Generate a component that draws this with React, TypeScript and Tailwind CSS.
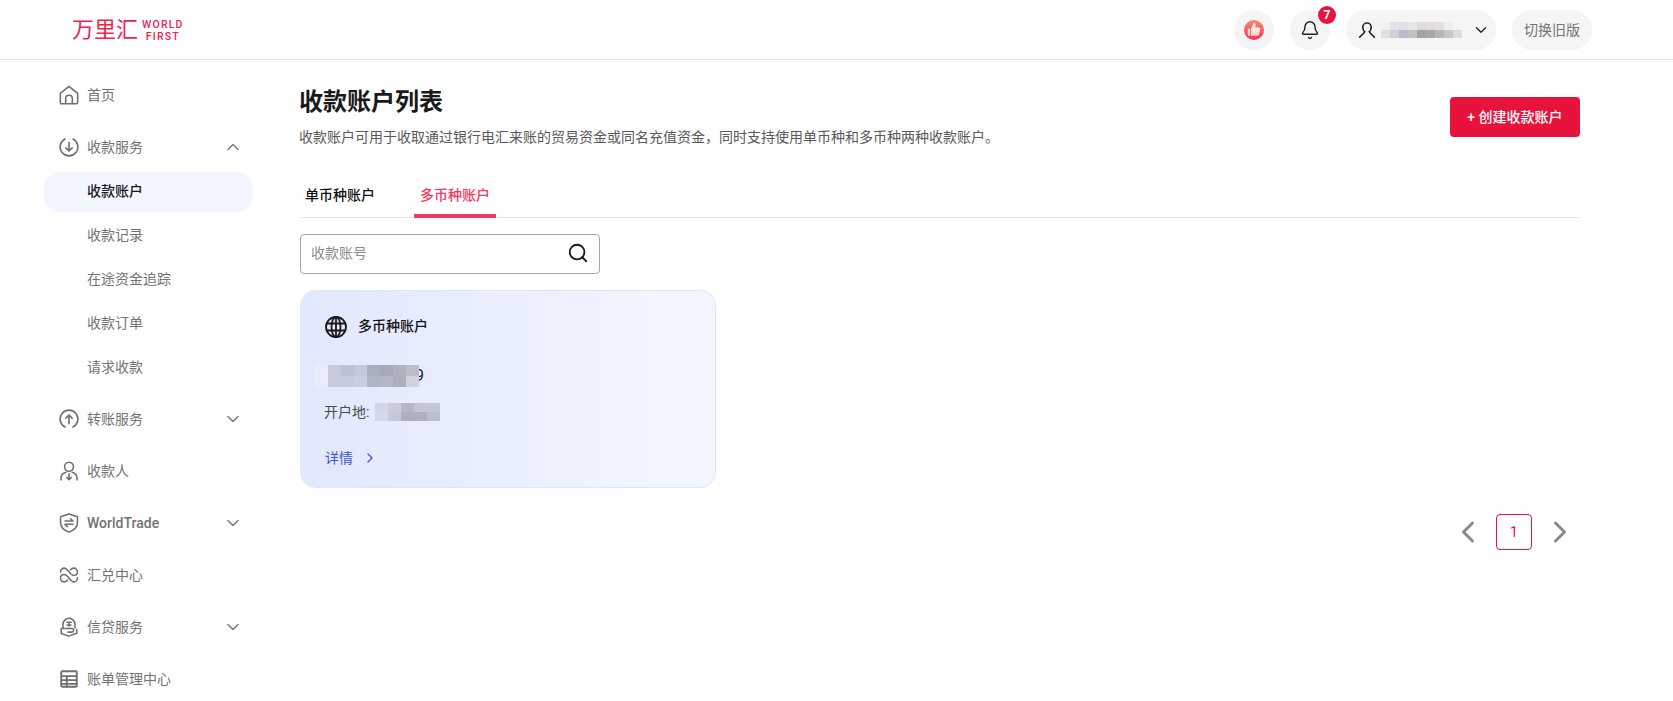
// App.tsx
import React from 'react';
import { ChevronDown, ChevronUp, ChevronLeft, ChevronRight, Search, Bell } from 'lucide-react';

const ICON = 'w-5 h-5 shrink-0 text-[#6f6f6f]';

function HomeIcon() {
    return (
        <svg className={ICON} viewBox="0 0 18 18" fill="none" stroke="currentColor" strokeWidth={1.4} strokeLinejoin="round">
            <path d="M1.2 7.6 9 1.2l7.8 6.4v8.2a1 1 0 0 1-1 1H2.2a1 1 0 0 1-1-1z" />
            <path d="M6 16.8v-4.6a3 3 0 0 1 6 0v4.6" />
        </svg>
    );
}

function CircleDownIcon() {
    return (
        <svg className={ICON} viewBox="0 0 18 18" fill="none" stroke="currentColor" strokeWidth={1.5} strokeLinecap="round" strokeLinejoin="round">
            <path d="M5.4 1.8a8 8 0 1 0 7.2 0" />
            <path d="M9 5v7.4M6.2 9.8 9 12.6l2.8-2.8" />
        </svg>
    );
}

function CircleUpIcon() {
    return (
        <svg className={ICON} viewBox="0 0 18 18" fill="none" stroke="currentColor" strokeWidth={1.5} strokeLinecap="round" strokeLinejoin="round">
            <path d="M5.4 16.2a8 8 0 1 1 7.2 0" />
            <path d="M9 13V5.8M6.2 8.2 9 5.4l2.8 2.8" />
        </svg>
    );
}

function PayeeIcon() {
    return (
        <svg className={ICON} viewBox="0 0 18 18" fill="none" stroke="currentColor" strokeWidth={1.4} strokeLinecap="round" strokeLinejoin="round">
            <circle cx="9" cy="5.2" r="4" />
            <path d="M1.8 17v-1.6c0-2.6 1.8-4.4 4.4-5.2M16.2 17v-1.6c0-2.6-1.8-4.4-4.4-5.2" />
            <path d="M9 11.6v5M7 14.8 9 16.8l2-2" />
        </svg>
    );
}

function ShieldIcon() {
    return (
        <svg className={ICON} viewBox="0 0 18 18" fill="none" stroke="currentColor" strokeWidth={1.4} strokeLinecap="round" strokeLinejoin="round">
            <path d="M9 .9 16.6 3.4v5.2c0 4-3 7-7.6 8.6-4.600-1.600-7.600-4.600-7.600-8.600V3.400z" />
            <path d="M5.400 7.200h7.200L10.400 5.200M12.600 10.200H5.400l2.200 2" />
        </svg>
    );
}

function ExchangeIcon() {
    return (
        <svg className={ICON} viewBox="0 0 18 18" fill="none" stroke="currentColor" strokeWidth={1.4} strokeLinecap="round" strokeLinejoin="round">
            <path d="M1.400 6.400c0-2.200 1.600-3.600 3.400-3.600 3 0 5 6.600 8.400 6.600 2 0 3.400-1.200 3.400-3 0-2-1.400-3.600-3.400-3.600-1.400 0-2.400.8-3 1.600" />
            <path d="M16.600 11.600c0 2.200-1.600 3.600-3.400 3.600-3 0-5-6.600-8.400-6.600-2 0-3.400 1.200-3.400 3 0 2 1.400 3.600 3.400 3.600 1.400 0 2.400-.8 3-1.600" />
        </svg>
    );
}

function LoanIcon() {
    return (
        <svg className={ICON} viewBox="0 0 18 18" fill="none" stroke="currentColor" strokeWidth={1.4} strokeLinecap="round" strokeLinejoin="round">
            <path d="M3.600 9.800V6.600a5.400 5.400 0 0 1 10.800 0v3.200" />
            <path d="M2 10.400h9.600a1.600 1.600 0 0 1 0 3.200H8M2 10.400v4.400l6.800 2.400 7.200-2.600v-3.400" />
            <path d="M7 4.800h4M9 4.800v3.600M7.200 7.200h3.600" />
        </svg>
    );
}

function TableIcon() {
    return (
        <svg className={ICON} viewBox="0 0 18 18" fill="none" stroke="currentColor" strokeWidth={1.7}>
            <rect x="2" y="2" width="14" height="14" rx="1" />
            <path d="M2 6.400h14M2 10h14M2 13.400h14M7 6.400V16" />
        </svg>
    );
}

function ThumbIcon() {
    return (
        <svg className="w-5 h-5" viewBox="0 0 20 20">
            <defs>
                <linearGradient id="thumbBg" x1="0" y1="0" x2="0" y2="1">
                    <stop offset="0" stopColor="#f98a6a" />
                    <stop offset="1" stopColor="#f5305f" />
                </linearGradient>
                <linearGradient id="thumbFg" x1="0" y1="0" x2="0" y2="1">
                    <stop offset="0" stopColor="#ffffff" />
                    <stop offset="1" stopColor="#fbd3bb" />
                </linearGradient>
            </defs>
            <circle cx="10" cy="10" r="10" fill="url(#thumbBg)" />
            <path
                d="M3.800 8.800h2.400v7H3.800zM7 8.800 9.800 3c1.200-.2 1.900.7 1.800 1.900l-.3 2.700h3.600c.9 0 1.500.8 1.300 1.700l-1.200 5.200c-.2.800-.8 1.300-1.600 1.300H7z"
                fill="url(#thumbFg)"
            />
        </svg>
    );
}

function UserIcon() {
    return (
        <svg className="w-[18px] h-[18px] text-[#222]" viewBox="0 0 18 18" fill="none" stroke="currentColor" strokeWidth={1.6} strokeLinecap="round">
            <path d="M6.600 10.600C5.200 9.600 4.800 8 4.800 6.200a4.200 4.200 0 0 1 8.400 0c0 1.800-.4 3.400-1.800 4.400" />
            <path d="M6.600 10.600c-.2 2-3.200 2.800-5 5.600M11.400 10.600c.2 2 3.200 2.800 5 5.600" />
        </svg>
    );
}

function GlobeIcon() {
    return (
        <svg className="w-[22px] h-[22px] text-[#1a1a1a]" viewBox="0 0 22 22" fill="none" stroke="currentColor" strokeWidth={1.8}>
            <circle cx="11" cy="11" r="10" />
            <ellipse cx="11" cy="11" rx="4.500" ry="10" />
            <path d="M11 1v20M1.500 7.500h19M1.500 14.500h19" />
        </svg>
    );
}

// stands in for the pixelated parts of the screenshot
function Mosaic({ colors, cell }: { colors: string[][]; cell: string }) {
    return (
        <div className="flex flex-col blur-[0.5px]">
            {colors.map((row, i) => (
                <div key={i} className="flex">
                    {row.map((c, j) => (
                        <span key={j} className={cell} style={{ backgroundColor: c }} />
                    ))}
                </div>
            ))}
        </div>
    );
}

const userBlur = [
    ['#f1f1f1', '#e4e4e6', '#dfe0e4', '#e6e6e6', '#dcdcde', '#e2dddc', '#e4e0de', '#eeeeee', '#f4f4f4'],
    ['#e2e0da', '#cfd0d0', '#b8bcc6', '#c2c2c4', '#a5a2a2', '#a8a8a6', '#b4b6b8', '#c8c8c4', '#dcdcdc'],
];

const accountBlur = [
    ['#e9ecfb', '#c6cade', '#bcc1d4', '#c3c8da', '#a9aec0', '#a8a9b6', '#b0b0be', '#bcbdc8'],
    ['#e9ecfb', '#c8cbdc', '#c7cbde', '#cacee0', '#b0b5c6', '#b5b7c6', '#aeafbc', '#ced1e0'],
];

const placeBlur = [
    ['#d2d6e6', '#c8cbdc', '#b5b6c6', '#c3c5d6', '#c3c6d6'],
    ['#d4d8e8', '#c5c8d8', '#aeafbe', '#afb0be', '#bcbecc'],
];

const subItems = ['收款账户', '收款记录', '在途资金追踪', '收款订单', '请求收款'];

function NavRow({ icon, label, chevron, bold }: { icon: React.ReactNode; label: string; chevron?: 'up' | 'down'; bold?: boolean }) {
    return (
        <div className="h-10 mb-3 flex items-center pl-[15px] pr-[10px] text-sm text-[#737373]">
            {icon}
            <span className={`ml-[8px] flex-1 ${bold ? 'font-medium' : ''}`}>{label}</span>
            {chevron === 'up' && <ChevronUp className="w-5 h-5" strokeWidth={1.6} />}
            {chevron === 'down' && <ChevronDown className="w-5 h-5" strokeWidth={1.6} />}
        </div>
    );
}

function Sidebar() {
    return (
        <aside className="w-[300px] shrink-0 pl-[44px] pr-[47px] pt-[15px]">
            <NavRow icon={<HomeIcon />} label="首页" />
            <div className="-mb-[7px]">
                <NavRow icon={<CircleDownIcon />} label="收款服务" chevron="up" />
            </div>
            <div className="mb-[11px]">
                {subItems.map((item, i) => (
                    <div
                        key={item}
                        className={`h-10 mb-1 pb-[2px] flex items-center pl-[43px] text-sm rounded-2xl ${i === 0 ? 'bg-[#f2f6ff] text-[#1a1a1a] font-medium' : 'text-[#737373]'}`}
                    >
                        {item}
                    </div>
                ))}
            </div>
            <NavRow icon={<CircleUpIcon />} label="转账服务" chevron="down" />
            <NavRow icon={<PayeeIcon />} label="收款人" />
            <NavRow icon={<ShieldIcon />} label="WorldTrade" chevron="down" bold />
            <NavRow icon={<ExchangeIcon />} label="汇兑中心" />
            <NavRow icon={<LoanIcon />} label="信贷服务" chevron="down" />
            <NavRow icon={<TableIcon />} label="账单管理中心" />
        </aside>
    );
}

function Header() {
    return (
        <header className="h-[60px] shrink-0 border-b border-[#e5e5e5] flex items-center justify-between pl-[72px] pr-[81px]">
            <div className="flex items-center text-[#f0234f]">
                <span className="text-[22px] leading-none">万里汇</span>
                <div className="ml-[4px] pt-[2px] flex flex-col items-center text-[10.500px] leading-[12px] font-medium tracking-[1.200px]">
                    <span>WORLD</span>
                    <span>FIRST</span>
                </div>
            </div>
            <div className="flex items-center gap-4">
                <div className="w-10 h-10 rounded-full bg-[#f5f5f5] flex items-center justify-center">
                    <ThumbIcon />
                </div>
                <div className="relative w-10 h-10 rounded-full bg-[#f5f5f5] flex items-center justify-center">
                    <Bell className="w-5 h-5 text-[#222]" strokeWidth={1.7} />
                    <span className="absolute -top-1 -right-[6px] w-[18px] h-[18px] rounded-full bg-[#e8133d] text-white text-xs font-bold flex items-center justify-center">
                        7
                    </span>
                </div>
                <div className="w-[150px] h-10 rounded-full bg-[#f5f5f5] flex items-center pl-3 pr-[6px]">
                    <UserIcon />
                    <div className="ml-[5px] flex-1">
                        <Mosaic colors={userBlur} cell="w-[9px] h-[8px]" />
                    </div>
                    <ChevronDown className="w-[18px] h-[18px] text-[#222]" strokeWidth={1.8} />
                </div>
                <div className="w-20 h-10 rounded-full bg-[#f5f5f5] flex items-center justify-center text-sm text-[#737373]">
                    切换旧版
                </div>
            </div>
        </header>
    );
}

function AccountCard() {
    return (
        <div className="mt-4 w-[416px] h-[198px] rounded-2xl border border-[#dfe5fa] bg-gradient-to-r from-[#e2e8fd] to-[#f4f7ff] pl-6 pt-[25px]">
            <div className="flex items-center">
                <GlobeIcon />
                <span className="ml-[11px] pb-[2px] text-sm font-medium text-[#111]">多币种账户</span>
            </div>
            <div className="mt-[26px] h-6 -ml-[10px] flex items-center">
                <Mosaic colors={accountBlur} cell="w-[13px] h-[11px]" />
                <span className="-ml-[4px] text-base text-[#222]">9</span>
            </div>
            <div className="mt-[14px] h-5 -ml-px flex items-center text-sm text-[#4a4a4a]">
                <span>开户地:</span>
                <div className="ml-[6px]">
                    <Mosaic colors={placeBlur} cell="w-[13px] h-[9px]" />
                </div>
            </div>
            <div className="mt-[26px] h-5 flex items-center text-sm text-[#3d55d6]">
                <span>详情</span>
                <ChevronRight className="ml-[9px] w-4 h-4" strokeWidth={1.9} />
            </div>
        </div>
    );
}

function Main() {
    return (
        <main className="flex-1 pr-[93px] pt-[26px]">
            <div className="flex justify-between">
                <div className="-ml-px">
                    <h1 className="text-2xl font-bold text-[#1a1a1a]">收款账户列表</h1>
                    <p className="mt-[9px] text-sm text-[#595959]">
                        收款账户可用于收取通过银行电汇来账的贸易资金或同名充值资金，同时支持使用单币种和多币种两种收款账户。
                    </p>
                </div>
                <button className="mt-[11px] w-[130px] h-10 rounded bg-[#e8133d] text-white text-sm font-medium">+ 创建收款账户</button>
            </div>

            <div className="mt-[30px] h-[41px] border-b border-[#e5e5e5] flex gap-[34px] text-sm font-medium">
                <div className="h-[41px] px-[5px] pb-[6px] flex items-center text-[#111]">单币种账户</div>
                <div className="h-[41px] px-[6px] pb-[2px] flex items-center text-[#f23a5c] border-b-4 border-[#f23a5c]">多币种账户</div>
            </div>

            <div className="mt-4 w-[300px] h-10 rounded border border-[#a3a3ab] flex items-center pl-[10px] pr-[10px] pb-[2px]">
                <span className="flex-1 text-sm text-[#8c8c8c]">收款账号</span>
                <Search className="w-[22px] h-[22px] text-[#1a1a1a]" strokeWidth={2} />
            </div>

            <AccountCard />

            <div className="mt-[26px] pr-[2px] flex items-center justify-end gap-[10px]">
                <ChevronLeft className="w-9 h-9 text-[#8a8a8a]" strokeWidth={2} />
                <div className="w-9 h-9 rounded border border-[#e8133d] flex items-center justify-center text-sm text-[#e8133d]">1</div>
                <ChevronRight className="w-9 h-9 text-[#8a8a8a]" strokeWidth={2} />
            </div>
        </main>
    );
}

export default function App() {
    return (
        <div className="h-[701px] overflow-hidden flex flex-col bg-white font-['Roboto','Noto_Sans_CJK_SC',sans-serif]">
            <Header />
            <div className="flex flex-1">
                <Sidebar />
                <Main />
            </div>
        </div>
    );
}
